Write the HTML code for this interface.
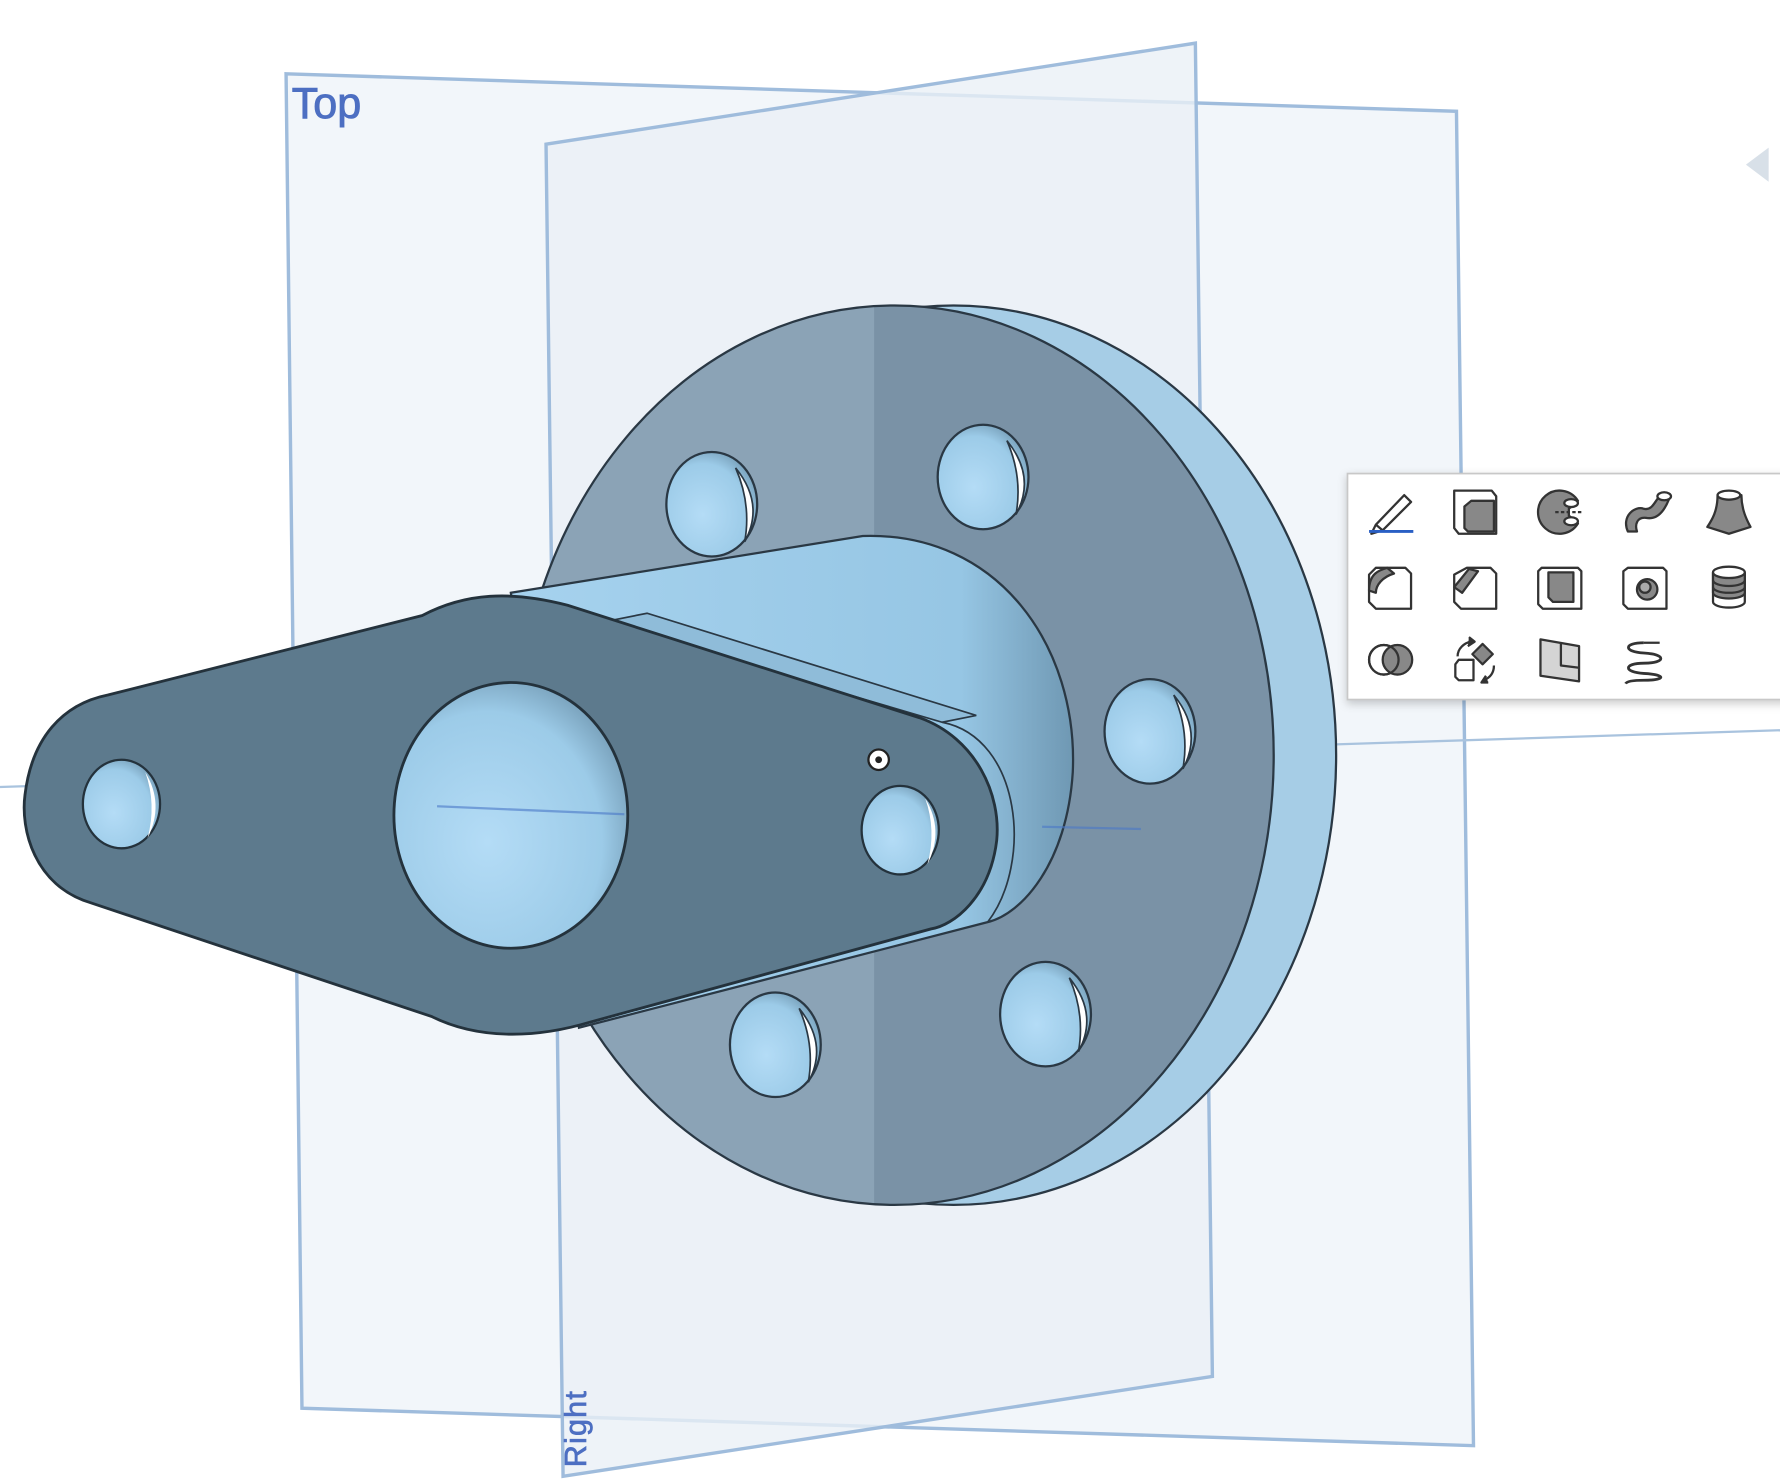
<!DOCTYPE html>
<html><head><style>
html,body{margin:0;padding:0;background:#fff;width:1780px;height:1482px;overflow:hidden}
svg{display:block}
</style></head><body>
<svg width="1780" height="1482" viewBox="0 0 1568 1305" preserveAspectRatio="none" xmlns="http://www.w3.org/2000/svg">
<defs>
<radialGradient id="hole" cx="0.4" cy="0.6" r="0.7"><stop offset="0" stop-color="#b4dcf6"/><stop offset="0.7" stop-color="#9ccbe8"/><stop offset="1" stop-color="#6e94ad"/></radialGradient>
<linearGradient id="hub" x1="0" y1="0" x2="1" y2="0"><stop offset="0" stop-color="#a6d2ee"/><stop offset="0.8" stop-color="#96c6e4"/><stop offset="1" stop-color="#6f98b3"/></linearGradient>
<filter id="sh" x="-10%" y="-10%" width="130%" height="130%"><feDropShadow dx="0" dy="3" stdDeviation="4" flood-color="#000" flood-opacity="0.2"/></filter>
<clipPath id="face"><ellipse cx="788" cy="665" rx="334" ry="396"/></clipPath>
</defs>
<rect width="1568" height="1305" fill="#fff"/>
<polygon points="252,65 1283,98 1298,1273 266,1240" fill="#f2f6fa" stroke="#9fbcdc" stroke-width="3"/>
<polygon points="481,127 1053,38 1068,1212 496,1300" fill="#eaf0f6" fill-opacity="0.8" stroke="#9fbcdc" stroke-width="3"/>
<line x1="0" y1="693" x2="1568" y2="643" stroke="#a9c3de" stroke-width="2"/>
<text x="257" y="104" font-family="Liberation Sans, sans-serif" font-size="38" fill="#4d6fc2" stroke="#4d6fc2" stroke-width="0.8">Top</text>
<text transform="translate(516,1292) rotate(-90)" font-family="Liberation Sans, sans-serif" font-size="27" fill="#4d6fc2" stroke="#4d6fc2" stroke-width="0.6" letter-spacing="1">Right</text>
<polygon points="1558,130 1538,145 1558,160" fill="#d8e0e8"/>
<ellipse cx="840" cy="665" rx="337" ry="396" fill="#a6cde6" stroke="#2a3844" stroke-width="2"/>
<ellipse cx="788" cy="665" rx="334" ry="396" fill="#7a92a6"/>
<rect x="440" y="260" width="330" height="810" fill="#8ba3b6" clip-path="url(#face)"/>
<ellipse cx="788" cy="665" rx="334" ry="396" fill="none" stroke="#2a3844" stroke-width="2"/>
<g stroke="#2a3844" stroke-width="2">
<ellipse cx="627" cy="444" rx="40" ry="46" fill="url(#hole)"/>
<ellipse cx="866" cy="420" rx="40" ry="46" fill="url(#hole)"/>
<ellipse cx="1013" cy="644" rx="40" ry="46" fill="url(#hole)"/>
<ellipse cx="921" cy="893" rx="40" ry="46" fill="url(#hole)"/>
<ellipse cx="683" cy="920" rx="40" ry="46" fill="url(#hole)"/>
</g>
<g fill="#fff" stroke="#2a3844" stroke-width="1.5">
<path d="M648,412 Q674,444 656,477 Q662,444 648,412Z"/>
<path d="M887,388 Q913,420 895,453 Q901,420 887,388Z"/>
<path d="M1034,612 Q1060,644 1042,677 Q1048,644 1034,612Z"/>
<path d="M942,861 Q968,893 950,926 Q956,893 942,861Z"/>
<path d="M704,888 Q730,920 712,953 Q718,920 704,888Z"/>
</g>
<path d="M450,522 L760,472 C880,468 950,570 945,680 C940,760 900,805 870,812 L510,905 Z" fill="url(#hub)" stroke="#2a3844" stroke-width="2"/>
<path d="M530,548 L570,540 L860,630 L830,636 Z" fill="#8fbcd9" stroke="#2a3844" stroke-width="1.5"/>
<path d="M830,636 C900,650 910,760 870,812" fill="none" stroke="#2a3844" stroke-width="1.5"/>
<path d="M95,612 L372,542 C410,522 450,520 500,533 L810,632 C860,650 882,700 878,740 C872,790 840,815 820,818 L520,900 C470,915 420,915 380,895 L80,795 C30,780 18,730 22,700 C28,650 55,620 95,612 Z" fill="#5d7a8d" stroke="#24323c" stroke-width="2.5"/>
<ellipse cx="450" cy="718" rx="103" ry="117" fill="url(#hole)" stroke="#24323c" stroke-width="2.5"/>
<ellipse cx="107" cy="708" rx="34" ry="39" fill="url(#hole)" stroke="#24323c" stroke-width="2"/>
<path d="M128,680 Q145,708 130,738 Q138,708 128,680Z" fill="#fff"/>
<ellipse cx="793" cy="731" rx="34" ry="39" fill="url(#hole)" stroke="#24323c" stroke-width="2"/>
<path d="M815,703 Q832,731 817,761 Q825,731 815,703Z" fill="#fff"/>
<circle cx="774" cy="669" r="9" fill="#fff" stroke="#222" stroke-width="2"/>
<circle cx="774" cy="669" r="3" fill="#222"/>
<line x1="385" y1="710" x2="550" y2="717" stroke="#4a78c8" stroke-width="2" opacity="0.6"/>
<line x1="918" y1="728" x2="1005" y2="730" stroke="#4a78c8" stroke-width="2" opacity="0.6"/>
<rect x="1187" y="417" width="395" height="199" fill="#fff" stroke="#c8c8c8" stroke-width="1.5" filter="url(#sh)"/>
<g stroke="#333" stroke-width="2" stroke-linejoin="round" fill="none">
<path d="M1212,462 L1237,436 L1243,442 L1218,467 Z M1212,462 L1208,470 L1218,467"/>
<line x1="1206" y1="468" x2="1245" y2="468" stroke="#2a5fc4" stroke-width="2.5"/>
<path d="M1281,432 L1314,432 L1318,437 L1318,470 L1285,470 L1281,465 Z" fill="#fff"/>
<path d="M1290,446 L1296,441 L1316,441 L1316,468 L1293,468 L1290,465 Z" fill="#888"/>
<path d="M1390,441 A19,19 0 1 0 1390,461 L1382,454 L1382,448 Z" fill="#888"/>
<ellipse cx="1384" cy="443" rx="6" ry="3.5" fill="#fff"/><ellipse cx="1384" cy="459" rx="6" ry="3.5" fill="#fff"/>
<line x1="1370" y1="451" x2="1394" y2="451" stroke-dasharray="3 2"/>
<path d="M1434,468 C1428,455 1440,445 1448,448 C1456,450 1458,440 1463,436 L1470,440 C1466,450 1460,458 1450,456 C1442,455 1440,462 1442,468 Z" fill="#888"/>
<ellipse cx="1466" cy="437" rx="6" ry="3.5" fill="#fff"/>
<path d="M1513,436 L1534,436 C1534,450 1540,460 1542,464 L1523,470 L1504,464 C1508,458 1513,450 1513,436 Z" fill="#888"/>
<ellipse cx="1523" cy="436" rx="10" ry="4" fill="#fff"/>
<path d="M1206,506 L1212,500 L1238,500 L1243,505 L1243,536 L1212,536 L1206,530 Z" fill="#fff"/>
<path d="M1206,520 C1206,505 1215,502 1222,500 L1228,505 C1218,508 1212,515 1212,522 Z" fill="#888"/>
<path d="M1281,506 L1292,500 L1313,500 L1318,505 L1318,536 L1287,536 L1281,530 Z" fill="#fff"/>
<path d="M1281,517 L1294,501 L1302,503 L1288,522 Z" fill="#888"/>
<path d="M1355,503 L1358,500 L1390,500 L1393,503 L1393,536 L1359,536 L1355,532 Z" fill="#fff"/>
<path d="M1364,504 L1386,504 L1386,530 L1368,530 L1364,526 Z" fill="#888"/>
<path d="M1430,503 L1434,500 L1465,500 L1468,503 L1468,536 L1434,536 L1430,532 Z" fill="#fff"/>
<circle cx="1451" cy="519" r="9" fill="#888"/><circle cx="1449" cy="517" r="5" fill="#aaa"/>
<path d="M1509,504 L1509,530 A14,5 0 0 0 1537,530 L1537,504" fill="#fff"/>
<path d="M1509,504 L1509,522 A14,5 0 0 0 1537,522 L1537,504" fill="#888"/>
<ellipse cx="1523" cy="504" rx="14" ry="5" fill="#fff"/>
<path d="M1509,511 A14,5 0 0 0 1537,511 M1509,517 A14,5 0 0 0 1537,517"/>
<circle cx="1219" cy="581" r="13" fill="#fff"/>
<circle cx="1231" cy="581" r="13" fill="#888"/>
<circle cx="1219" cy="581" r="13"/>
<path d="M1282,585 L1285,581 L1298,581 L1298,599 L1285,599 L1282,596 Z" fill="#fff"/>
<path d="M1297,576 L1306,567 L1315,576 L1306,585 Z" fill="#888"/>
<path d="M1284,578 C1284,571 1290,566 1296,565"/><path d="M1294,561 L1299,565 L1293,569" fill="#333"/>
<path d="M1316,586 C1316,593 1312,597 1307,599"/><path d="M1309,595 L1305,601 L1311,601" fill="#333"/>
<path d="M1357,563 L1391,569 L1391,600 L1357,595 Z" fill="#d4d4d4"/>
<path d="M1375,566 L1375,586 L1391,588"/>
<path d="M1448,566 C1430,566 1430,574 1448,575 C1468,576 1468,584 1448,584 C1430,584 1430,592 1448,593 C1468,594 1468,599 1448,599 C1438,599 1433,600 1432,602" stroke-width="2.5"/>
<path d="M1448,566 L1462,566"/>
</g>
</svg>
</body></html>
